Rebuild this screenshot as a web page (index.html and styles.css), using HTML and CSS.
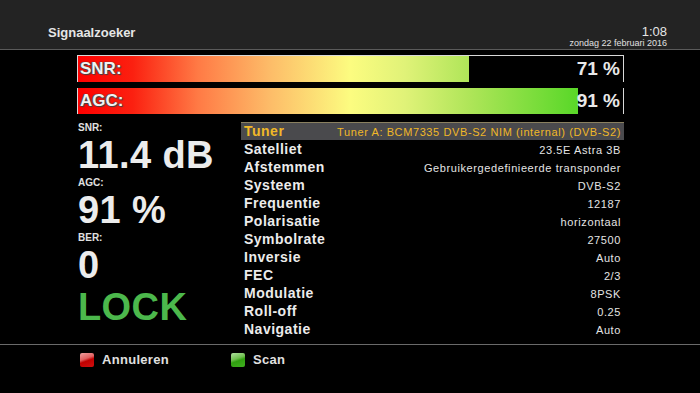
FILE: index.html
```html
<!DOCTYPE html>
<html lang="nl">
<head>
<meta charset="utf-8">
<title>Signaalzoeker</title>
<link rel="stylesheet" href="styles.css">
</head>
<body>
<div class="screen">
  <header class="header">
    <div class="title">Signaalzoeker</div>
    <div class="clock">
      <div class="time">1:08</div>
      <div class="date">zondag 22 februari 2016</div>
    </div>
  </header>

  <section class="bars">
    <div class="bar bar-top" style="--level: 71%">
      <span class="bar-label">SNR:</span>
      <span class="bar-value">71 %</span>
    </div>
    <div class="bar" style="--level: 91%">
      <span class="bar-label">AGC:</span>
      <span class="bar-value">91 %</span>
    </div>
  </section>

  <main class="main">
    <div class="stats">
      <div class="stat-label first">SNR:</div>
      <div class="stat-value v1">11.4 dB</div>
      <div class="stat-label l2">AGC:</div>
      <div class="stat-value v2">91 %</div>
      <div class="stat-label l3">BER:</div>
      <div class="stat-value v3">0</div>
      <div class="stat-value lock">LOCK</div>
    </div>
    <div class="info">
      <div class="row selected"><span class="key">Tuner</span><span class="val">Tuner A: BCM7335 DVB-S2 NIM (internal) (DVB-S2)</span></div>
      <div class="row"><span class="key">Satelliet</span><span class="val">23.5E Astra 3B</span></div>
      <div class="row"><span class="key">Afstemmen</span><span class="val">Gebruikergedefinieerde transponder</span></div>
      <div class="row"><span class="key">Systeem</span><span class="val">DVB-S2</span></div>
      <div class="row"><span class="key">Frequentie</span><span class="val">12187</span></div>
      <div class="row"><span class="key">Polarisatie</span><span class="val">horizontaal</span></div>
      <div class="row"><span class="key">Symbolrate</span><span class="val">27500</span></div>
      <div class="row"><span class="key">Inversie</span><span class="val">Auto</span></div>
      <div class="row"><span class="key">FEC</span><span class="val">2/3</span></div>
      <div class="row"><span class="key">Modulatie</span><span class="val">8PSK</span></div>
      <div class="row"><span class="key">Roll-off</span><span class="val">0.25</span></div>
      <div class="row"><span class="key">Navigatie</span><span class="val">Auto</span></div>
    </div>
  </main>

  <footer class="footer">
    <div class="button"><span class="key-icon red"></span><span class="button-text">Annuleren</span></div>
    <div class="button"><span class="key-icon green"></span><span class="button-text">Scan</span></div>
  </footer>
</div>
</body>
</html>
```

FILE: styles.css
```css
* {
  box-sizing: border-box;
}

html, body {
  margin: 0;
  padding: 0;
  background: #000;
}

body {
  font-family: "Liberation Sans", Arial, sans-serif;
  color: #e8e8e8;
}

.screen {
  width: 700px;
  height: 393px;
  overflow: hidden;
  background: #000;
  display: flex;
  flex-direction: column;
}

/* Header */
.header {
  height: 50px;
  flex: 0 0 50px;
  background: #232323;
  border-bottom: 1px solid #5a5a5a;
  display: flex;
  justify-content: space-between;
  align-items: flex-start;
  padding: 0 33px 0 48px;
}

.title {
  margin-top: 26px;
  font-size: 13px;
  line-height: 14px;
  font-weight: bold;
  color: #e6e6e6;
}

.clock {
  margin-top: 25px;
  display: flex;
  flex-direction: column;
  align-items: flex-end;
}

.time {
  font-size: 13px;
  line-height: 13px;
  color: #e6e6e6;
}

.date {
  font-size: 9px;
  line-height: 10px;
  color: #e0e0e0;
}

/* Bars */
.bars {
  display: flex;
  flex-direction: column;
  gap: 6px;
  margin-top: 5px;
  padding-left: 77px;
  width: 624px;
}

.bar {
  height: 27px;
  display: flex;
  align-items: center;
  justify-content: space-between;
  padding: 0 3px 0 2px;
  border-left: 1px solid #d8d8d8;
  border-right: 1px solid #d8d8d8;
  background:
    linear-gradient(to right, transparent calc(var(--level) + 4px), #000 calc(var(--level) + 4px)),
    linear-gradient(to right,
      #ff0000 0%,
      #fb2010 10%,
      #ff7a45 22%,
      #fdbb68 35%,
      #fcfc80 50%,
      #e0f278 60%,
      #aee558 72%,
      #5cd82a 91%,
      #4cd020 100%);
}

.bar + .bar {
  height: 26px;
}

.bar-top {
  border-top: 1px solid #d8d8d8;
}

.bar-label {
  font-size: 17px;
  font-weight: bold;
  color: #f2f2f2;
  text-shadow: 0 0 1px #333, 1px 1px 1px #444, -1px 0 1px #555;
}

.bar-value {
  font-size: 19px;
  font-weight: bold;
  color: #e8e8e8;
}

/* Main */
.main {
  flex: 1 1 auto;
  display: flex;
  padding-top: 8px;
  padding-left: 78px;
}

.stats {
  width: 163px;
  display: flex;
  flex-direction: column;
  padding-top: 1px;
}

.stat-label {
  font-size: 10px;
  line-height: 10px;
  font-weight: bold;
  color: #e0e0e0;
}

.stat-value {
  font-size: 38px;
  line-height: 36px;
  font-weight: bold;
  color: #ececec;
  letter-spacing: 0.4px;
}

.v1 { margin-top: 4px; }
.l2 { margin-top: 5px; }
.v2 { margin-top: 4px; }
.l3 { margin-top: 5px; }
.v3 { margin-top: 4px; }

.lock {
  margin-top: 6px;
  color: #4cb84c;
}

.info {
  width: 383px;
  display: flex;
  flex-direction: column;
}

.row {
  height: 18px;
  display: flex;
  justify-content: space-between;
  align-items: baseline;
  padding: 0 3px 0 3px;
  line-height: 18px;
}

.row.selected {
  background: #4a4a4d;
  border-top: 1px solid #8a8060;
  line-height: 17px;
}

.key {
  font-size: 14px;
  font-weight: bold;
  letter-spacing: 0.5px;
  color: #ececec;
}

.val {
  font-size: 11px;
  letter-spacing: 0.6px;
  color: #e4e4e4;
}

.selected .key,
.selected .val {
  color: #f0b828;
}

/* Footer */
.footer {
  flex: 0 0 49px;
  border-top: 1px solid #6a6a6a;
  display: flex;
  align-items: flex-start;
  padding: 7px 0 0 80px;
}

.button {
  display: flex;
  align-items: center;
  gap: 8px;
  width: 151px;
}

.button + .button {
  width: auto;
}

.key-icon {
  width: 14px;
  height: 14px;
  border-radius: 2px;
  flex: 0 0 14px;
}

.key-icon.red {
  background: linear-gradient(160deg, #f0a0a0 0%, #e06060 40%, #c00000 55%, #d01010 100%);
}

.key-icon.green {
  background: linear-gradient(160deg, #b0e0a0 0%, #70c050 40%, #30a010 55%, #40b020 100%);
}

.button-text {
  font-size: 13px;
  font-weight: bold;
  color: #e0e0e0;
  letter-spacing: 0.3px;
}
```
